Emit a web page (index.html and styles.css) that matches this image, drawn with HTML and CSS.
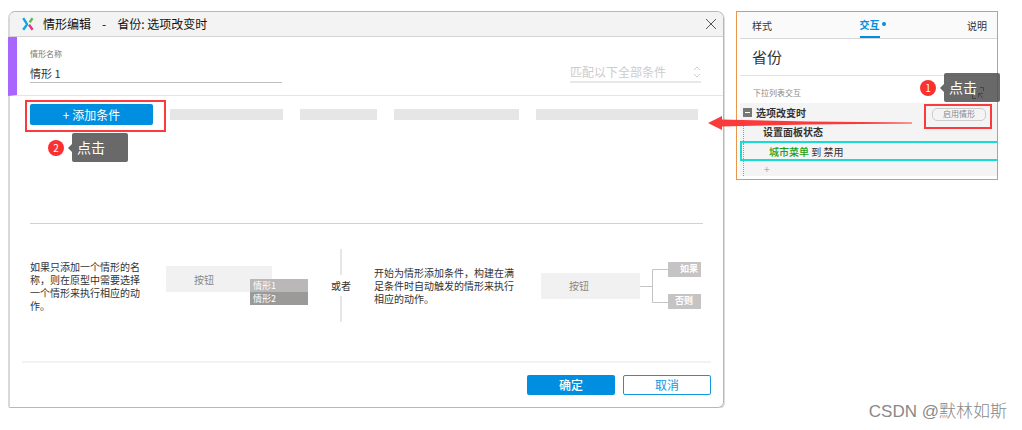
FILE: index.html
```html
<!DOCTYPE html>
<html lang="zh-CN">
<head>
<meta charset="utf-8">
<title>情形编辑</title>
<link rel="stylesheet" href="styles.css">
</head>
<body>
<main class="page">
  <section class="dialog" aria-label="情形编辑">
    <header class="dialog-head">
      <svg class="logo" viewBox="0 0 12 14" fill="none" stroke-width="2.4" aria-hidden="true">
        <path d="M1.2 1.2L4.6 6.3Q5.2 7.2 4.600 8.100L1.200 12.800" stroke="#0aa5e2"/>
        <path d="M10.500 1.200L7.600 5.400" stroke="#4fc04c"/>
        <path d="M7 7.600L10.600 12.800" stroke="#e5308c"/>
      </svg>
      <h1 class="dialog-title"><span>情形编辑</span><span>-</span><span>省份: 选项改变时</span></h1>
      <button class="close" type="button" aria-label="关闭">
        <svg viewBox="0 0 12 12" fill="none" stroke="#555" aria-hidden="true"><path d="M1 1L11 11M11 1L1 11"/></svg>
      </button>
    </header>

    <div class="case">
      <div class="field">
        <label for="case-name">情形名称</label>
        <input id="case-name" type="text" value="情形 1">
      </div>
      <div class="match">
        <select aria-label="匹配条件"><option>匹配以下全部条件</option></select>
        <svg class="match-icon" viewBox="0 0 8 12" fill="none" stroke="#cfcfcf" aria-hidden="true"><path d="M1 4L4 1L7 4M1 8L4 11L7 8"/></svg>
      </div>
    </div>

    <div class="conditions">
      <div class="add-wrap">
        <button class="primary add" type="button">+ 添加条件</button>
        <div class="callout callout-two"><span class="step">2</span><span class="tip">点击</span></div>
      </div>
      <i class="bar bar-a"></i><i class="bar bar-b"></i><i class="bar bar-c"></i><i class="bar bar-d"></i>
    </div>

    <div class="help">
      <p class="help-one">如果只添加一个情形的名称，则在原型中需要选择一个情形来执行相应的动作。</p>
      <div class="demo-menu">
        <div class="demo-box">按钮</div>
        <ul class="menu"><li>情形1</li><li>情形2</li></ul>
      </div>
      <div class="or">或者</div>
      <p class="help-two">开始为情形添加条件，构建在满足条件时自动触发的情形来执行相应的动作。</p>
      <div class="demo-tree">
        <div class="demo-box">按钮</div>
        <svg class="branch" viewBox="0 0 28 47" fill="none" stroke="#c4c4c4" aria-hidden="true"><path d="M0 24.500H12.500M28 7.500H12.500V40.500H28"/></svg>
        <div class="tags"><span class="tag tag-if">如果</span><span class="tag">否则</span></div>
      </div>
    </div>

    <footer class="actions">
      <button class="primary" type="button">确定</button>
      <button class="secondary" type="button">取消</button>
    </footer>
  </section>

  <aside class="panel">
    <nav class="tabs">
      <button type="button">样式</button>
      <button type="button" class="active">交互</button>
      <button type="button">说明</button>
    </nav>
    <h2 class="panel-title">省份</h2>
    <div class="list-head">
      <span>下拉列表交互</span>
      <svg class="target" viewBox="0 0 12 12" fill="none" stroke="#000" aria-hidden="true"><path d="M.5 4V.5H4M8 .5H11.500V4M.5 8V11.500H4M11 11L6.500 6.500M6.500 10.500V6.500H11" /></svg>
      <div class="callout callout-one"><span class="step">1</span><span class="tip">点击</span></div>
    </div>
    <div class="tree">
      <div class="row event">
        <span class="toggle" aria-hidden="true"></span><b>选项改变时</b>
        <div class="enable-wrap"><button class="enable" type="button">启用情形</button></div>
      </div>
      <div class="row action"><b>设置面板状态</b></div>
      <div class="row target-row"><span class="green">城市菜单</span>&nbsp;到 禁用</div>
      <div class="row add-row">+</div>
    </div>
    <svg class="arrow" viewBox="0 0 206 14" aria-hidden="true"><path d="M0 7L14 0V3.500L100 5.500L204 6.500V7.500L100 8.500L14 10.500V14Z" fill="#fb3b3b"/></svg>
  </aside>
</main>
<p class="watermark">CSDN @默林如斯</p>
</body>
</html>
```

FILE: styles.css
```css
* { box-sizing: border-box; }
body {
  margin: 0;
  background: #fff;
  color: #333;
  font: 10px/13px "Noto Sans CJK SC", sans-serif;
}
h1, h2, p, ul { margin: 0; padding: 0; font-weight: 400; }
ul { list-style: none; }
button, input, select { font: inherit; color: inherit; margin: 0; padding: 0; border: 0; background: none; }
svg { display: block; }

.page {
  display: grid;
  grid-template-columns: 716fr 262fr;
  gap: 12px;
  align-items: start;
  padding: 11px 24px 0 8px;
}

/* Dialog */
.dialog {
  border: 1px solid #b8b8b8;
  border-left: 2px solid #d9d9d9;
  border-radius: 7px 7px 6px 2px;
  box-shadow: 1px 1px 0 #ddd;
}
.dialog-head {
  display: flex;
  align-items: center;
  height: 25px;
  padding: 0 6px 0 12px;
  background: #f3f3f3;
  border-bottom: 1px solid #d4d4d4;
  border-radius: 6px 6px 0 0;
}
.logo { width: 12px; height: 14px; }
.dialog-title { display: flex; gap: 11px; flex: 1; margin-left: 9px; font-size: 12px; line-height: 16px; color: #111; }
.close { width: 12px; height: 12px; }

.case {
  display: flex;
  justify-content: space-between;
  align-items: flex-end;
  height: 59px;
  margin-left: -2px;
  padding: 0 22px 12px 13px;
  border-left: 9px solid #a966ff;
  border-bottom: 1px solid #e6e6e6;
}
.field { display: flex; flex-direction: column; width: 252px; }
.field label { font-size: 8px; line-height: 12px; color: #777; }
.field input { width: 100%; height: 23px; padding-top: 3px; font-size: 11px; border-bottom: 1px solid #c0c0c0; }
.match { position: relative; width: 131px; }
.match select { appearance: none; width: 100%; height: 20px; font-size: 12px; line-height: 16px; color: #ccc; border-bottom: 2px solid #e8e8e8; border-radius: 0; }
.match-icon { position: absolute; top: 3px; right: 0; width: 8px; height: 12px; pointer-events: none; }

.primary { background: #008fe0; color: #fff; border-radius: 2px; }
.conditions { display: flex; align-items: center; gap: 17px; margin: 8px 25px 0 20px; }
.add-wrap { position: relative; flex: 0 0 123px; }
.add-wrap::after, .enable-wrap::after { content: ""; position: absolute; border: 2px solid #fb3b3b; pointer-events: none; }
.add-wrap::after { inset: -4px -13px -7px -5px; }
.add { width: 100%; height: 21px; font-size: 12px; line-height: 16px; }
.bar { height: 11px; background: #e6e6e6; }
.bar-a { flex: 113; }
.bar-b { flex: 77; }
.bar-c { flex: 125; }
.bar-d { flex: 162; }

.callout { position: absolute; z-index: 2; display: flex; align-items: center; gap: 8px; }
.callout-two { top: 29px; left: 18px; }
.callout-one { top: -3px; right: -3px; }
.step { width: 16px; height: 16px; border-radius: 50%; background: #fb3030; color: #fff; text-align: center; line-height: 16px; }
.tip { position: relative; width: 56px; height: 29px; padding-left: 5px; background: rgba(80, 80, 80, .86); border-radius: 2px; color: #fff; font-size: 14px; line-height: 28px; }
.tip::before { content: ""; position: absolute; top: 11px; right: 100%; border: 4px solid transparent; border-right-color: #666; border-left: 0; }

.help {
  display: flex;
  align-items: center;
  gap: 23px;
  margin: 98px 20px 0;
  padding: 25px 0 39px;
  border-top: 1px solid #d2d2d2;
}
.help-one { flex: 113; }
.help-two { flex: 144; }
.demo-box { display: flex; align-items: center; background: #f1f1f1; color: #888; }
.demo-menu { position: relative; flex: 0 0 142px; height: 39px; }
.demo-menu .demo-box { width: 106px; height: 26px; padding-left: 28px; }
.menu { position: absolute; right: 0; bottom: 0; width: 58px; color: #fff; font-size: 9px; }
.menu li { padding-left: 3px; background: #b9b7b7; }
.menu li + li { background: #9c9a99; }
.or { display: flex; flex-direction: column; align-items: center; gap: 4px; flex: 0 0 20px; }
.or::before, .or::after { content: ""; width: 2px; height: 26px; background: #e6e6e6; }
.demo-tree { display: flex; align-items: center; flex: 0 0 162px; }
.demo-tree .demo-box { width: 99px; height: 26px; padding-left: 28px; }
.branch { width: 28px; height: 47px; }
.tags { display: flex; flex-direction: column; justify-content: space-between; height: 47px; }
.tag { width: 33px; height: 15px; padding-left: 7px; background: #c5c3c3; color: #fff; font-size: 9px; font-weight: 700; line-height: 14px; }
.tag-if { padding-left: 12px; }

.actions { display: flex; justify-content: flex-end; gap: 8px; margin: 0 12px; padding: 12px 0; border-top: 2px solid #f2f2f2; }
.actions button { width: 88px; height: 20px; font-size: 12px; line-height: 16px; }
.actions .primary { font-weight: 500; }
.secondary { border: 1px solid #1296df; border-radius: 2px; color: #1296df; }

/* Inspector */
.panel { position: relative; border: 1px solid #ec9447; padding: 0 0 3px 3px; }
.tabs { display: flex; justify-content: space-between; height: 27px; padding: 0 10px 0 12px; background: #fafafa; border-bottom: 1px solid #d8d8d8; }
.tabs button { position: relative; width: 20px; white-space: nowrap; }
.tabs .active { color: #008fe0; font-weight: 700; border-bottom: 2px solid #008fe0; }
.active::after { content: ""; position: absolute; top: 10px; right: -6px; width: 4px; height: 4px; border-radius: 50%; background: #008fe0; }
.panel-title { padding: 0 12px; font-size: 15px; line-height: 36px; border-bottom: 1px solid #e3e3e3; }
.list-head { position: relative; display: flex; justify-content: space-between; align-items: center; height: 27px; padding: 6px 13px 0; font-size: 8px; color: #888; }
.target { width: 12px; height: 12px; }
.list-head .step { font-size: 10px; }
.tree { background: #f4f4f4; }
.row { display: flex; align-items: center; height: 19px; padding-left: 3px; }
.row:not(.event)::before { content: ""; align-self: stretch; border-left: 1px dotted #999; }
.event { position: relative; gap: 4px; }
.toggle { display: grid; place-items: center; width: 9px; height: 9px; background: #777; }
.toggle::before { content: ""; width: 5px; height: 1px; background: #fff; }
.enable-wrap { position: relative; margin: 3px 11px 0 auto; }
.enable-wrap::after { inset: -4px -6px -8px -8px; }
.enable { display: block; width: 54px; height: 13px; border: 1px solid #ccc; border-radius: 5px; color: #888; font-size: 8px; line-height: 10px; }
.action b { margin-left: 19px; }
.target-row { height: 20px; border: solid #16dcd3; border-width: 2px 0 2px 2px; padding-left: 1px; }
.green { margin-left: 25px; color: #1aa010; font-weight: 500; }
.add-row { height: 15px; gap: 20px; color: #aaa; }
.arrow { position: absolute; z-index: 3; top: 104px; left: -29px; width: 206px; height: 14px; }

.watermark { position: absolute; right: 15px; bottom: 5px; color: #888; font-family: "Liberation Sans", "Noto Sans CJK SC", sans-serif; font-size: 17px; font-weight: 300; line-height: 26px; }
```
